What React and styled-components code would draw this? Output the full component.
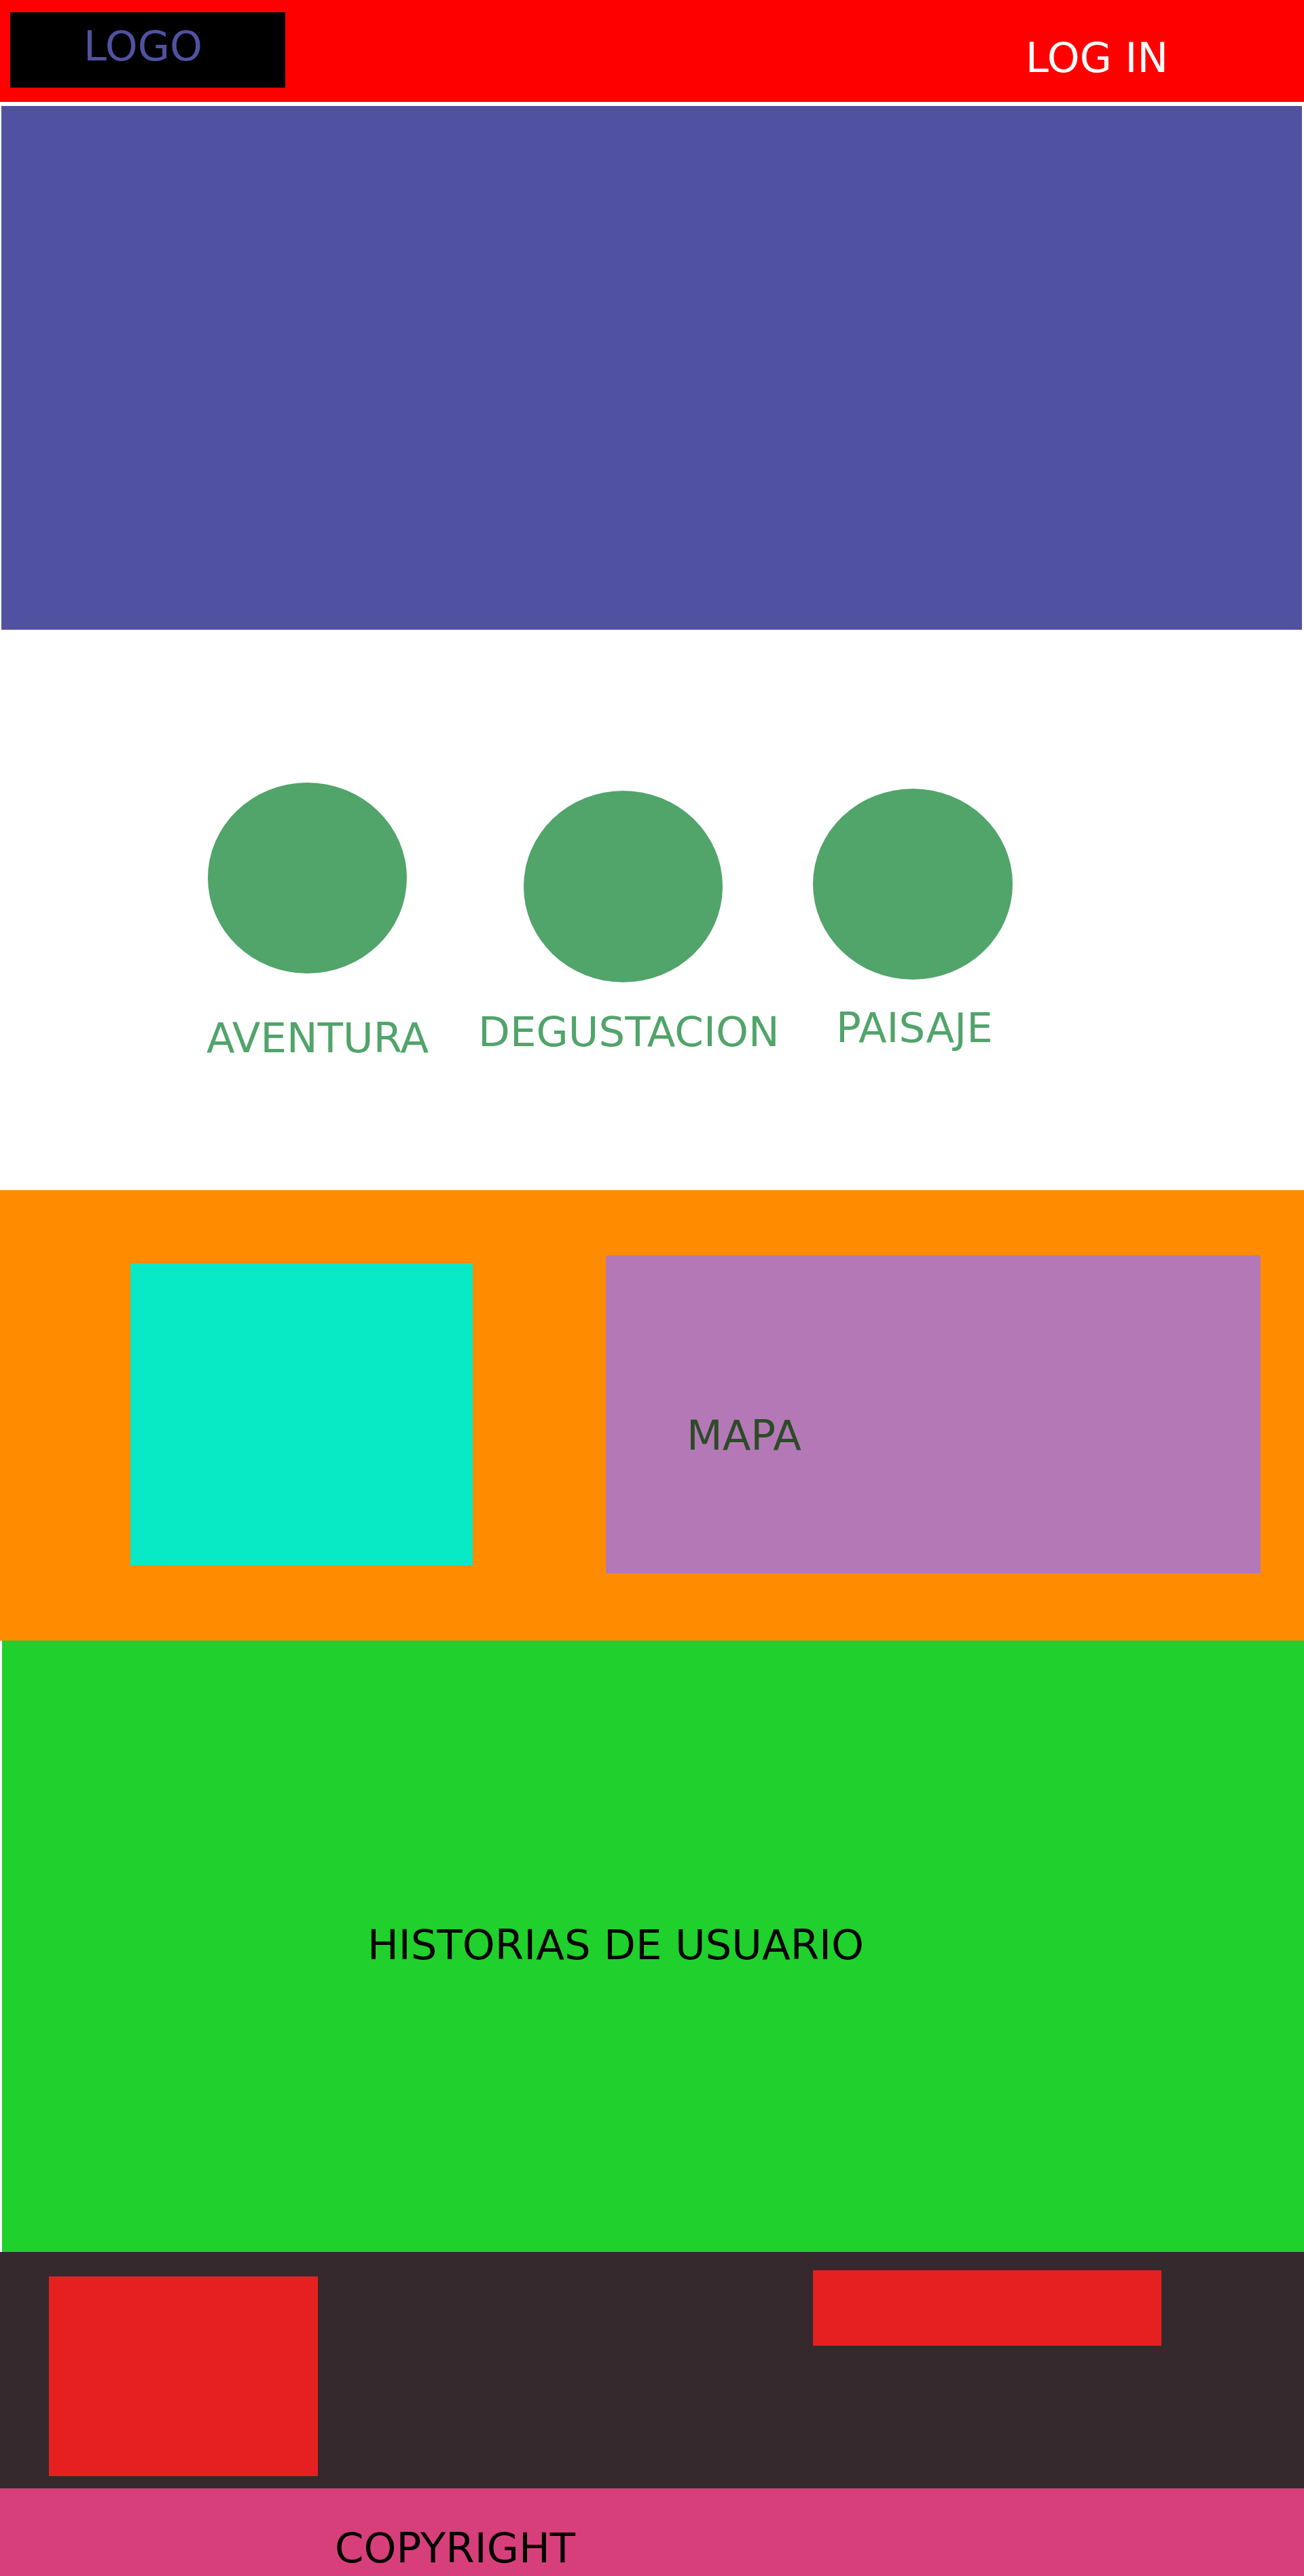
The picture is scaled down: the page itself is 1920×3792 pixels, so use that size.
import React from "react";
import styled, { createGlobalStyle } from "styled-components";

const GlobalStyle = createGlobalStyle`
  html, body { margin: 0; padding: 0; background: #ffffff; }
  body { font-family: "DejaVu Sans", "Liberation Sans", sans-serif; }
  * { box-sizing: border-box; }
`;

const Page = styled.div`
  width: 1920px;
  display: flex;
  flex-direction: column;
  background: #ffffff;
`;

const Text = styled.span`
  display: block;
  font-family: "DejaVu Sans", "Liberation Sans", sans-serif;
  font-size: 61px;
  line-height: 61px;
  white-space: nowrap;
  color: ${(p) => p.$color || "#000000"};
`;

/* ---------- Header ---------- */
const Header = styled.header`
  height: 150px;
  background: #ff0000;
  display: flex;
  align-items: flex-start;
`;

const LogoBox = styled.div`
  width: 405px;
  height: 111px;
  margin: 18px 0 0 15px;
  padding: 19px 0 0 108px;
  background: #000000;
`;

const LoginLink = styled(Text)`
  margin: 54px 0 0 1090px;
  color: #ffffff;
  cursor: pointer;
`;

/* ---------- Hero ---------- */
const Hero = styled.section`
  height: 771px;
  margin: 6px 3px 0 2px;
  background: #5052a1;
`;

/* ---------- Categories ---------- */
const Categories = styled.section`
  height: 825px;
  display: flex;
  align-items: flex-start;
`;

const Category = styled.div`
  flex-shrink: 0;
  width: ${(p) => p.$w}px;
  margin-left: ${(p) => p.$left}px;
  margin-top: ${(p) => p.$top}px;
  display: flex;
  flex-direction: column;
  align-items: flex-start;
`;

const Circle = styled.div`
  width: ${(p) => p.$w}px;
  height: ${(p) => p.$h}px;
  border-radius: 50%;
  background: #51a46a;
`;

const CategoryLabel = styled(Text)`
  color: #51a46a;
  margin-left: ${(p) => p.$dx}px;
  margin-top: ${(p) => p.$dy}px;
`;

/* ---------- Media / map ---------- */
const MediaBand = styled.section`
  height: 663px;
  background: #ff8c00;
  display: flex;
  align-items: flex-start;
`;

const MediaTile = styled.div`
  flex-shrink: 0;
  width: 504px;
  height: 444px;
  margin: 108px 0 0 192px;
  background: #08eac6;
`;

const MapPanel = styled.div`
  flex-shrink: 0;
  width: 964px;
  height: 468px;
  margin: 96px 0 0 196px;
  padding: 234px 0 0 119px;
  background: #b578b6;
`;

/* ---------- Stories ---------- */
const Stories = styled.section`
  height: 900px;
  margin-left: 3px;
  padding: 417px 0 0 538px;
  background: #20d02c;
`;

/* ---------- Footer ---------- */
const Footer = styled.footer`
  height: 348px;
  background: #35292e;
  display: flex;
  align-items: flex-start;
`;

const FooterBlock = styled.div`
  flex-shrink: 0;
  width: ${(p) => p.$w}px;
  height: ${(p) => p.$h}px;
  margin-left: ${(p) => p.$left}px;
  margin-top: ${(p) => p.$top}px;
  background: #e62020;
`;

const Copyright = styled.div`
  height: 129px;
  padding: 57px 0 0 493px;
  background: #d73f7b;
`;

const categories = [
  { name: "AVENTURA", left: 306, top: 225, w: 293, h: 281, dx: -2, dy: 64 },
  { name: "DEGUSTACION", left: 172, top: 237, w: 293, h: 282, dx: -67, dy: 42 },
  { name: "PAISAJE", left: 133, top: 234, w: 294, h: 281, dx: 34, dy: 40 },
];

export default function App() {
  return (
    <>
      <GlobalStyle />
      <Page>
        <Header>
          <LogoBox>
            <Text $color="#5052a1">LOGO</Text>
          </LogoBox>
          <LoginLink>LOG IN</LoginLink>
        </Header>

        <Hero />

        <Categories>
          {categories.map((c) => (
            <Category key={c.name} $left={c.left} $top={c.top} $w={c.w}>
              <Circle $w={c.w} $h={c.h} />
              <CategoryLabel $dx={c.dx} $dy={c.dy}>
                {c.name}
              </CategoryLabel>
            </Category>
          ))}
        </Categories>

        <MediaBand>
          <MediaTile />
          <MapPanel>
            <Text $color="#2d4b28">MAPA</Text>
          </MapPanel>
        </MediaBand>

        <Stories>
          <Text>HISTORIAS DE USUARIO</Text>
        </Stories>

        <Footer>
          <FooterBlock $left={72} $top={36} $w={396} $h={294} />
          <FooterBlock $left={729} $top={27} $w={513} $h={111} />
        </Footer>

        <Copyright>
          <Text>COPYRIGHT</Text>
        </Copyright>
      </Page>
    </>
  );
}
